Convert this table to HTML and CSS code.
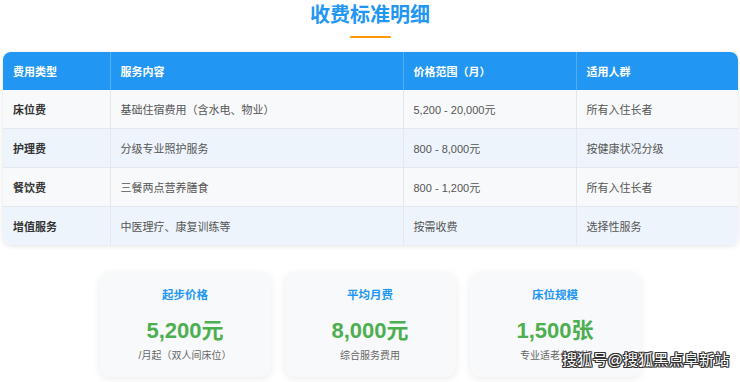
FILE: index.html
```html
<!DOCTYPE html>
<html lang="zh-CN">
<head>
<meta charset="utf-8">
<title>收费标准明细</title>
<link rel="stylesheet" href="styles.css">
</head>
<body>
<div class="page">
  <div class="heading">
    <h2 class="title">收费标准明细</h2>
    <div class="title-bar"></div>
  </div>

  <div class="table-wrap">
    <table class="fee-table">
      <colgroup>
        <col class="c1"><col class="c2"><col class="c3"><col class="c4">
      </colgroup>
      <thead>
        <tr>
          <th>费用类型</th>
          <th>服务内容</th>
          <th>价格范围（月）</th>
          <th>适用人群</th>
        </tr>
      </thead>
      <tbody>
        <tr class="odd">
          <td class="type">床位费</td>
          <td>基础住宿费用（含水电、物业）</td>
          <td>5,200 - 20,000元</td>
          <td>所有入住长者</td>
        </tr>
        <tr class="even">
          <td class="type">护理费</td>
          <td>分级专业照护服务</td>
          <td>800 - 8,000元</td>
          <td>按健康状况分级</td>
        </tr>
        <tr class="odd">
          <td class="type">餐饮费</td>
          <td>三餐两点营养膳食</td>
          <td>800 - 1,200元</td>
          <td>所有入住长者</td>
        </tr>
        <tr class="even">
          <td class="type">增值服务</td>
          <td>中医理疗、康复训练等</td>
          <td>按需收费</td>
          <td>选择性服务</td>
        </tr>
      </tbody>
    </table>
  </div>

  <div class="cards">
    <div class="card">
      <div class="card-title">起步价格</div>
      <div class="card-value">5,200元</div>
      <div class="card-sub">/月起（双人间床位）</div>
    </div>
    <div class="card">
      <div class="card-title">平均月费</div>
      <div class="card-value">8,000元</div>
      <div class="card-sub">综合服务费用</div>
    </div>
    <div class="card">
      <div class="card-title">床位规模</div>
      <div class="card-value">1,500张</div>
      <div class="card-sub">专业适老化床位</div>
    </div>
  </div>

  <div class="watermark">搜狐号@搜狐黑点阜新站</div>
</div>
</body>
</html>
```

FILE: styles.css
```css
html, body {
  margin: 0;
  padding: 0;
  background: #ffffff;
}

body {
  font-family: "Liberation Sans", "Noto Sans CJK SC", sans-serif;
  color: #333;
  width: 740px;
  height: 382px;
  overflow: hidden;
}

.page {
  position: relative;
  height: 382px;
}

.heading {
  display: flex;
  flex-direction: column;
  align-items: center;
  padding-top: 1px;
}

.title {
  margin: 0;
  font-size: 20px;
  line-height: 28px;
  font-weight: 700;
  color: #2196f3;
}

.title-bar {
  width: 41px;
  height: 2px;
  margin-top: 7px;
  background: #ff9800;
  border-radius: 1px;
}

.table-wrap {
  margin: 14px 2px 0 3px;
  border-radius: 8px;
  overflow: hidden;
  box-shadow: 0 1px 5px rgba(0, 0, 0, 0.12);
}

.fee-table {
  width: 100%;
  border-collapse: collapse;
  table-layout: fixed;
  font-size: 11px;
}

.c1 { width: 107px; }
.c2 { width: 293px; }
.c3 { width: 173px; }
.c4 { width: auto; }

.fee-table th {
  background: #2196f3;
  color: #ffffff;
  font-weight: 700;
  text-align: left;
  height: 38px;
  padding: 0 10px;
  border-left: 1px solid rgba(255, 255, 255, 0.22);
}

.fee-table th:first-child,
.fee-table td:first-child {
  border-left: none;
}

.fee-table td {
  height: 38px;
  padding: 0 10px;
  color: #555;
  border-left: 1px solid #e4e8ec;
  border-top: 1px solid #e4e8ec;
}

.fee-table tbody tr:first-child td {
  border-top: none;
}

.fee-table td.type {
  font-weight: 700;
  color: #333;
}

.odd td { background: #f8f9fa; }
.even td { background: #edf4fb; }

.cards {
  display: flex;
  justify-content: center;
  gap: 14px;
  margin-top: 27px;
}

.card {
  width: 171px;
  height: 105px;
  box-sizing: border-box;
  padding-top: 15px;
  background: #f8f9fa;
  border-radius: 10px;
  box-shadow: 0 2px 8px rgba(0, 0, 0, 0.08);
  text-align: center;
}

.card-title {
  font-size: 11.5px;
  line-height: 16px;
  font-weight: 700;
  color: #2196f3;
}

.card-value {
  margin-top: 14px;
  font-size: 22px;
  line-height: 28px;
  font-weight: 700;
  color: #4caf50;
}

.card-sub {
  margin-top: 4px;
  font-size: 10px;
  line-height: 14px;
  color: #666;
}

.watermark {
  position: absolute;
  left: 562px;
  top: 351px;
  font-size: 15px;
  line-height: 18px;
  color: #ffffff;
  letter-spacing: 0.2px;
  text-shadow:
    1px 0 0 #333, -1px 0 0 #333, 0 1px 0 #333, 0 -1px 0 #333,
    1px 1px 0 #333, -1px -1px 0 #333, 1px -1px 0 #333, -1px 1px 0 #333;
}
```
